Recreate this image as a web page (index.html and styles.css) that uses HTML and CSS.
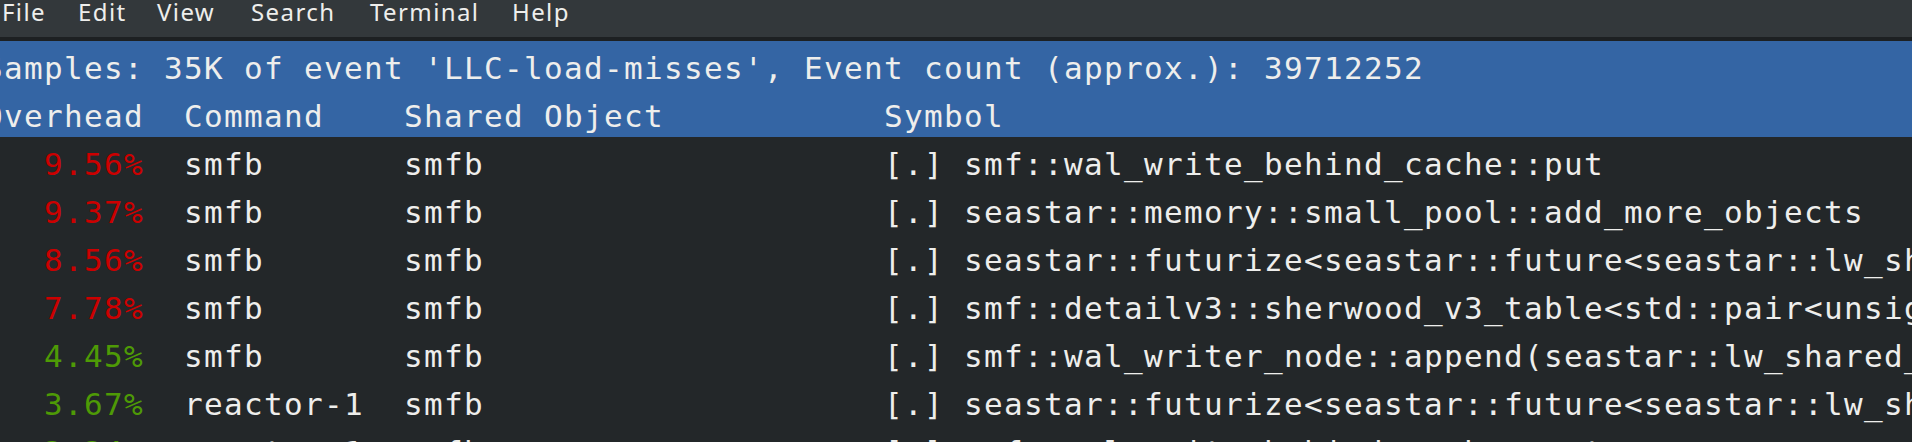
FILE: index.html
```html
<!DOCTYPE html>
<html>
<head>
<meta charset="utf-8">
<title>perf report</title>
<link rel="stylesheet" href="styles.css">
</head>
<body>
<div class="menubar">
  <span class="menu-item m-file">File</span>
  <span class="menu-item m-edit">Edit</span>
  <span class="menu-item m-view">View</span>
  <span class="menu-item m-search">Search</span>
  <span class="menu-item m-terminal">Terminal</span>
  <span class="menu-item m-help">Help</span>
</div>
<div class="separator"></div>
<div class="terminal">
  <div class="header">
    <div class="line">Samples: 35K of event 'LLC-load-misses', Event count (approx.): 39712252</div>
    <div class="line">Overhead  Command    Shared Object           Symbol</div>
  </div>
  <div class="rows">
    <div class="line"><span class="hot">   9.56%</span>  smfb       smfb                    [.] smf::wal_write_behind_cache::put</div>
    <div class="line"><span class="hot">   9.37%</span>  smfb       smfb                    [.] seastar::memory::small_pool::add_more_objects</div>
    <div class="line"><span class="hot">   8.56%</span>  smfb       smfb                    [.] seastar::futurize&lt;seastar::future&lt;seastar::lw_shared_ptr&lt;smf::wal_read_reply&gt; &gt; &gt;::apply</div>
    <div class="line"><span class="hot">   7.78%</span>  smfb       smfb                    [.] smf::detailv3::sherwood_v3_table&lt;std::pair&lt;unsigned long, seastar::lw_shared_ptr&gt; &gt;</div>
    <div class="line"><span class="warm">   4.45%</span>  smfb       smfb                    [.] smf::wal_writer_node::append(seastar::lw_shared_ptr&lt;smf::wal_write_request&gt;)</div>
    <div class="line"><span class="warm">   3.67%</span>  reactor-1  smfb                    [.] seastar::futurize&lt;seastar::future&lt;seastar::lw_shared_ptr&lt;smf::wal_read_reply&gt; &gt; &gt;::apply</div>
    <div class="line"><span class="warm">   3.34%</span>  reactor-1  smfb                    [.] smf::wal_write_behind_cache::put</div>
  </div>
</div>
</body>
</html>
```
FILE: styles.css
```css
html, body {
  margin: 0;
  padding: 0;
  background: #232729;
  overflow: hidden;
}

body {
  width: 1912px;
  height: 442px;
}

.menubar {
  height: 37px;
  background: #33383b;
  display: flex;
  align-items: flex-start;
  font-family: "Noto Sans", "Open Sans", sans-serif;
  font-size: 24px;
  letter-spacing: 1.4px;
  line-height: 23px;
  color: #eeeeec;
  padding-left: 2px;
  overflow: hidden;
}

.menu-item {
  white-space: pre;
}

.m-file { width: 76px; }
.m-edit { width: 79px; }
.m-view { width: 94px; }
.m-search { width: 119px; }
.m-terminal { width: 142px; }
.m-help { width: 70px; }

.separator {
  height: 4px;
  background: #1d2022;
}

.terminal {
  font-family: "DejaVu Sans Mono", "Liberation Mono", monospace;
  font-size: 31px;
  letter-spacing: 1.336px;
  color: #eeeeec;
  margin-left: -16px;
}

.header {
  background: #3465a4;
  margin-left: 16px;
}

.header .line {
  margin-left: -16px;
}

.line {
  height: 48px;
  box-sizing: border-box;
  padding-top: 6px;
  line-height: 42px;
  white-space: pre;
  overflow: hidden;
}

.hot {
  color: #cc0000;
}

.warm {
  color: #4e9a06;
}
```
